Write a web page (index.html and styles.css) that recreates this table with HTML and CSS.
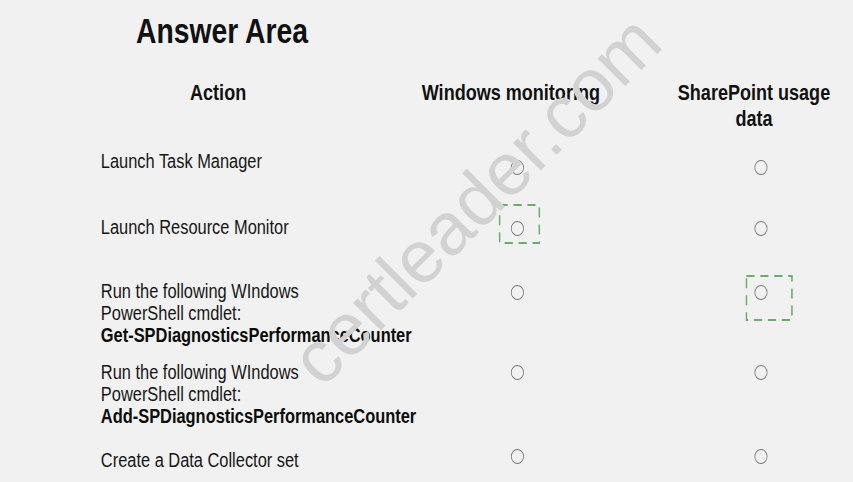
FILE: index.html
```html
<!DOCTYPE html>
<html>
<head>
<meta charset="utf-8">
<link rel="stylesheet" href="styles.css">
</head>
<body>
<div class="page">
  <div class="sheet">
    <h1 class="title">Answer Area</h1>
    <div class="row head">
      <div class="h-action">Action</div>
      <div class="h-col2">Windows monitoring</div>
      <div class="h-col3">SharePoint usage<br>data</div>
    </div>
    <div class="row r1">
      <div class="act">Launch Task Manager</div>
      <div class="cell c2"><span class="radio rad-low"></span></div>
      <div class="cell c3"><span class="radio rad-low"></span></div>
    </div>
    <div class="row r2">
      <div class="act">Launch Resource Monitor</div>
      <div class="cell c2"><span class="radio"><svg class="sel sel-a" width="51" height="40" viewBox="0 0 51 40"><rect x="1.2" y="1" width="48.6" height="38" fill="none" stroke="#6aae6a" stroke-width="2" stroke-dasharray="10 7"/></svg></span></div>
      <div class="cell c3"><span class="radio"></span></div>
    </div>
    <div class="row r3">
      <div class="act">Run the following WIndows<br>PowerShell cmdlet:<br><b>Get-SPDiagnosticsPerformanceCounter</b></div>
      <div class="cell c2"><span class="radio"></span></div>
      <div class="cell c3"><span class="radio"><svg class="sel sel-b" width="58" height="46" viewBox="0 0 58 46"><rect x="1.2" y="1" width="55.6" height="44" fill="none" stroke="#6aae6a" stroke-width="2" stroke-dasharray="10 7"/></svg></span></div>
    </div>
    <div class="row r4">
      <div class="act">Run the following WIndows<br>PowerShell cmdlet:<br><b>Add-SPDiagnosticsPerformanceCounter</b></div>
      <div class="cell c2"><span class="radio rad-4"></span></div>
      <div class="cell c3"><span class="radio rad-4"></span></div>
    </div>
    <div class="row r5">
      <div class="act">Create a Data Collector set</div>
      <div class="cell c2"><span class="radio rad-high"></span></div>
      <div class="cell c3"><span class="radio rad-high"></span></div>
    </div>
  </div>
  <div class="watermark">certleader.com</div>
</div>
</body>
</html>
```
FILE: styles.css
```css
html, body {
  margin: 0;
  padding: 0;
  background: #f1f1f1;
}
.page {
  position: relative;
  width: 853px;
  height: 482px;
  overflow: hidden;
  background: #f1f1f1;
  color: #111;
  font-family: "Liberation Sans", Arial, sans-serif;
}
/* the whole sheet is horizontally condensed, like the original capture */
.sheet {
  width: 1040px;
  transform: scaleX(0.82);
  transform-origin: 0 0;
}
.title {
  margin: 12px 0 0 166px;
  font-size: 34.5px;
  line-height: 38px;
  font-weight: bold;
  color: #111;
}
.row {
  display: grid;
  grid-template-columns: 310px 380px 220px;
  padding-left: 123px;
}
.head {
  margin-top: 30px;
  height: 70px;
  font-size: 22px;
  line-height: 26px;
  font-weight: bold;
  text-align: center;
  white-space: nowrap;
}
.h-action { padding-right: 24px; }
.h-col3 { padding-right: 7px; }
.act {
  font-size: 20px;
  line-height: 22px;
  white-space: nowrap;
  color: #161616;
}
.act b { font-weight: bold; color: #0c0c0c; }
.r1 { height: 66px; }
.r2 { height: 64px; }
.r3 { height: 81px; }
.r4 { height: 88px; }
.r5 { height: 33px; }
.cell {
  display: flex;
  justify-content: center;
  align-items: flex-start;
}
.c2 { padding-left: 15px; }
.c3 { padding-left: 10px; }
.radio {
  position: relative;
  display: block;
  width: 16px;
  height: 15px;
  box-sizing: border-box;
  border: 1px solid #7a7a7a;
  border-radius: 50%;
  margin-top: 5px;
}
.rad-low { margin-top: 10px; }
.rad-4 { margin-top: 4px; }
.rad-high { margin-top: 0; }
.sel {
  position: absolute;
  display: block;
}
.sel-a { left: -16px; top: -18px; }
.sel-b { left: -12px; top: -11px; }
.watermark {
  position: absolute;
  left: 476px;
  top: 200px;
  transform: translate(-50%, -50%) rotate(-45deg);
  font-size: 74px;
  line-height: 1;
  color: #d2d2d2;
  white-space: nowrap;
}
```
